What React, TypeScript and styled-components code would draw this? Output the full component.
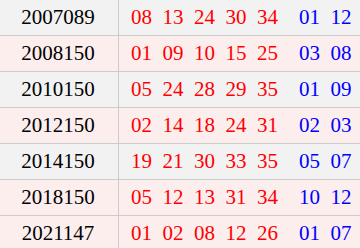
import React from "react";
import styled, { createGlobalStyle } from "styled-components";

const Global = createGlobalStyle`
  html, body { margin: 0; padding: 0; background: #ffffff; }
  body { overflow: hidden; }
`;

const Table = styled.div`
  display: flex;
  flex-direction: column;
  width: 360px;
  font-family: "Liberation Serif", "Times New Roman", serif;
  font-size: 21px;
`;

const Row = styled.div<{ $tone: "grey" | "pink" }>`
  display: grid;
  grid-template-columns: 119px 1fr;
  height: 36px;
  box-sizing: border-box;
  border-bottom: 1px solid #cccccc;
  background: ${(p) => (p.$tone === "grey" ? "#f2f2f2" : "#fdeeee")};
`;

const IssueCell = styled.div`
  display: flex;
  align-items: center;
  justify-content: center;
  box-sizing: border-box;
  border-right: 1px solid #cccccc;
  color: #000000;
  padding-right: 2px;
`;

const BallsCell = styled.div`
  display: flex;
  align-items: center;
  gap: 21px;
  padding-left: 12px;
`;

const Group = styled.div<{ $color: string }>`
  display: flex;
  gap: 10.5px;
  color: ${(p) => p.$color};
`;

const Ball = styled.span`
  display: inline-block;
`;

const rows: { issue: string; red: string[]; blue: string[]; tone: "grey" | "pink" }[] = [
  { issue: "2007089", red: ["08", "13", "24", "30", "34"], blue: ["01", "12"], tone: "grey" },
  { issue: "2008150", red: ["01", "09", "10", "15", "25"], blue: ["03", "08"], tone: "pink" },
  { issue: "2010150", red: ["05", "24", "28", "29", "35"], blue: ["01", "09"], tone: "grey" },
  { issue: "2012150", red: ["02", "14", "18", "24", "31"], blue: ["02", "03"], tone: "pink" },
  { issue: "2014150", red: ["19", "21", "30", "33", "35"], blue: ["05", "07"], tone: "grey" },
  { issue: "2018150", red: ["05", "12", "13", "31", "34"], blue: ["10", "12"], tone: "pink" },
  { issue: "2021147", red: ["01", "02", "08", "12", "26"], blue: ["01", "07"], tone: "pink" },
];

export default function App() {
  return (
    <>
      <Global />
      <Table>
        {rows.map((r) => (
          <Row key={r.issue} $tone={r.tone}>
            <IssueCell>{r.issue}</IssueCell>
            <BallsCell>
              <Group $color="#ff0000">
                {r.red.map((n, i) => (
                  <Ball key={i}>{n}</Ball>
                ))}
              </Group>
              <Group $color="#0000ff">
                {r.blue.map((n, i) => (
                  <Ball key={i}>{n}</Ball>
                ))}
              </Group>
            </BallsCell>
          </Row>
        ))}
      </Table>
    </>
  );
}
